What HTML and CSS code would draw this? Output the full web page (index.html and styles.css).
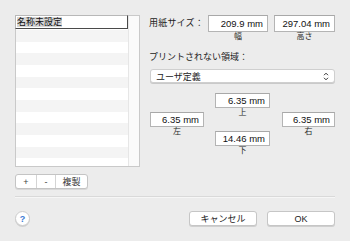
FILE: index.html
```html
<!DOCTYPE html>
<html>
<head>
    <meta charset="UTF-8" />
    <title>ページ設定</title>
    <link rel="stylesheet" href="styles.css">
</head>
<body>
    <div class="dialog">
        <div class="top">
            <div class="left">
                <div class="list">
                    <div class="rows">
                        <div class="edit"><span class="sel">名称未設定</span></div>
                        <div class="stripes"></div>
                    </div>
                    <div class="gutter"></div>
                </div>
                <div class="seg">
                    <span class="seg-btn plus">+</span>
                    <span class="seg-btn minus">-</span>
                    <span class="seg-btn dup">複製</span>
                </div>
            </div>

            <div class="right">
                <div class="size-row">
                    <span class="label size-label">用紙サイズ：</span>
                    <div class="fcol w60">
                        <div class="field tall">209.9 mm</div>
                        <div class="cap">幅</div>
                    </div>
                    <div class="fcol w61">
                        <div class="field tall">297.04 mm</div>
                        <div class="cap">高さ</div>
                    </div>
                </div>

                <div class="label area">プリントされない領域：</div>

                <div class="popup">
                    <span>ユーザ定義</span>
                    <svg class="updown" width="6" height="9" viewBox="0 0 6 9">
                        <path d="M1 3.2 L3 1.2 L5 3.2 M1 5.8 L3 7.8 L5 5.8" fill="none" stroke="#333" stroke-width="1"/>
                    </svg>
                </div>

                <div class="margins">
                    <div class="fcol w54 side">
                        <div class="field">6.35 mm</div>
                        <div class="cap">左</div>
                    </div>
                    <div class="fcol w55 mid">
                        <div class="field">6.35 mm</div>
                        <div class="cap">上</div>
                        <div class="field lower">14.46 mm</div>
                        <div class="cap">下</div>
                    </div>
                    <div class="fcol w53 side">
                        <div class="field">6.35 mm</div>
                        <div class="cap">右</div>
                    </div>
                </div>
            </div>
        </div>

        <div class="sep"></div>

        <div class="footer">
            <span class="help">?</span>
            <div class="actions">
                <span class="btn cancel">キャンセル</span>
                <span class="btn ok">OK</span>
            </div>
        </div>
    </div>
</body>
</html>
```

FILE: styles.css
```css
* {
    margin: 0;
    padding: 0;
    box-sizing: border-box;
}
body {
    background-color: #ececec;
    font-family: "Liberation Sans", "Noto Sans CJK JP", sans-serif;
    font-size: 9px;
    color: #222;
}
.dialog {
    width: 350px;
    height: 241px;
    padding: 15px 15px 0;
}

/* 上半分：左リスト + 右設定 */
.top {
    display: flex;
    height: 175px;
}
.left {
    width: 125px;
}
.list {
    display: flex;
    height: 152px;
    border: 1px solid #c9c9c9;
    background-color: #fff;
}
.rows {
    flex: 1;
    display: flex;
    flex-direction: column;
}
.edit {
    height: 14px;
    margin-top: -1px;
    margin-left: -1px;
    border: 1px solid #b8b8b8;
    border-right: 1px solid #4a4a4a;
    border-bottom: 1px solid #4a4a4a;
    background-color: #fff;
    padding-left: 1px;
    line-height: 12px;
}
.sel {
    background-color: #d6d6d6;
    color: #111;
}
.stripes {
    flex: 1;
    background: repeating-linear-gradient(#f4f4f4 0 11.67px, #fff 11.67px 23.33px);
    margin-top: 1px;
}
.gutter {
    width: 11px;
    background-color: #fafafa;
    border-left: 1px solid #e6e6e6;
}

.seg {
    display: flex;
    width: 73px;
    height: 15px;
    margin-top: 7px;
    background-color: #fff;
    border: 1px solid #c4c4c4;
    border-radius: 3px;
    box-shadow: 0 1px 0 #d8d8d8;
}
.seg-btn {
    display: flex;
    align-items: center;
    justify-content: center;
    border-right: 1px solid #d4d4d4;
    color: #444;
    font-size: 9px;
}
.plus {
    width: 21px;
}
.minus {
    width: 19px;
}
.dup {
    flex: 1;
    border-right: none;
    color: #333;
}

.right {
    margin-left: 9px;
    width: 186px;
}
.label {
    color: #222;
    font-size: 9px;
}
.size-row {
    display: flex;
}
.size-label {
    width: 59px;
    line-height: 17px;
    letter-spacing: 0.2px;
}
.fcol {
    display: flex;
    flex-direction: column;
}
.w60 {
    width: 60px;
}
.w61 {
    width: 61px;
    margin-left: 6px;
}
.w54 {
    width: 54px;
}
.w55 {
    width: 55px;
    margin-left: 11px;
}
.w53 {
    width: 53px;
    margin-left: 12px;
}
.field {
    height: 15px;
    background-color: #fff;
    border: 1px solid #b4b4b4;
    border-top-color: #a8a8a8;
    text-align: right;
    padding-right: 4px;
    line-height: 13px;
    font-size: 9.5px;
    color: #111;
}
.field.tall {
    height: 17px;
    line-height: 15px;
}
.cap {
    text-align: center;
    font-size: 8px;
    line-height: 10px;
    color: #2a2a2a;
}
.area {
    margin-top: 9px;
    line-height: 12px;
}
.popup {
    display: flex;
    align-items: center;
    justify-content: space-between;
    height: 14px;
    margin-top: 6px;
    margin-left: 1px;
    padding: 0 5px 0 5px;
    background-color: #fff;
    border-radius: 3px;
    border: 1px solid #cfcfcf;
    box-shadow: 0 1px 0 #c9c9c9;
    color: #222;
}
.margins {
    display: flex;
    margin-top: 10px;
    margin-left: 1px;
}
.side {
    margin-top: 19px;
}
.lower {
    margin-top: 13px;
}

.sep {
    height: 2px;
    margin-top: 6px;
    border-top: 1px solid #d9d9d9;
    border-bottom: 1px solid #f6f6f6;
}

.footer {
    display: flex;
    justify-content: space-between;
    align-items: center;
    margin-top: 13px;
}
.help {
    display: flex;
    align-items: center;
    justify-content: center;
    width: 15px;
    height: 15px;
    border-radius: 50%;
    background-color: #fff;
    border: 1px solid #cdcdcd;
    box-shadow: 0 1px 0 #d0d0d0;
    color: #3a7bd5;
    font-weight: bold;
    font-size: 9px;
}
.actions {
    display: flex;
}
.btn {
    display: flex;
    align-items: center;
    justify-content: center;
    width: 68px;
    height: 15px;
    background-color: #fff;
    border: 1px solid #c6c6c6;
    border-radius: 3px;
    box-shadow: 0 1px 0 #cfcfcf;
    color: #222;
}
.ok {
    margin-left: 10px;
}
```
